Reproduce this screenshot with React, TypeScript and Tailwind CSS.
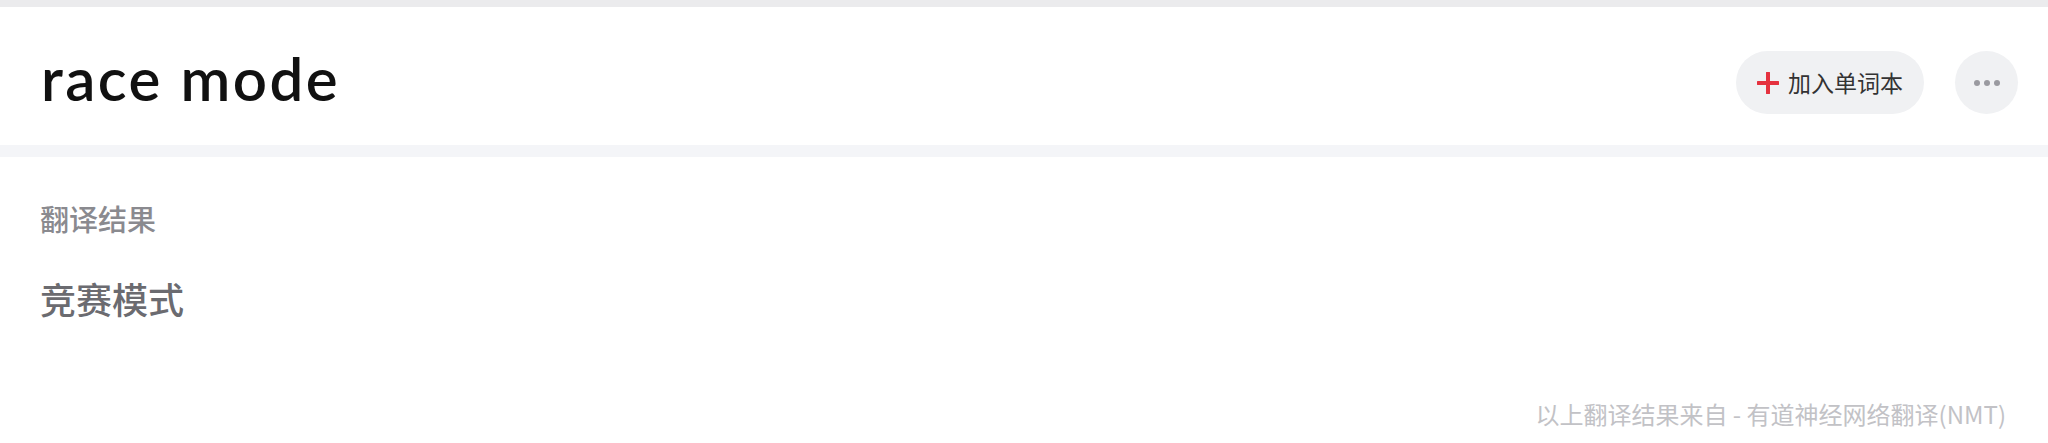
export default function App() {
  return (
    <div className="min-h-screen bg-white">
      {/* top edge */}
      <div className="h-[7px] bg-[#ebebed]" />

      {/* word header */}
      <div className="flex h-[138px] items-center justify-between pt-[13px] pl-[41px] pr-[30px]">
        <h1 className="-mt-[10px] font-['Lato',sans-serif] text-[60px] font-semibold leading-none tracking-[2.5px] text-[#111]">
          race mode
        </h1>
        <div className="flex items-center gap-[31px]">
          <button className="flex h-[63px] w-[188px] items-center justify-center gap-[9px] rounded-full bg-[#f0f1f3] font-['Noto_Sans_CJK_SC',sans-serif] text-[23px] text-[#333]">
            <svg width="22" height="22" viewBox="0 0 22 22">
              <path d="M11 1v20M1 11h20" stroke="#e5323f" strokeWidth="4" strokeLinecap="round" />
            </svg>
            <span>加入单词本</span>
          </button>
          <button className="flex h-[63px] w-[63px] items-center justify-center gap-[4px] rounded-full bg-[#f0f1f3]">
            <span className="h-[6px] w-[6px] rounded-full bg-[#9a9aa0]" />
            <span className="h-[6px] w-[6px] rounded-full bg-[#9a9aa0]" />
            <span className="h-[6px] w-[6px] rounded-full bg-[#9a9aa0]" />
          </button>
        </div>
      </div>

      <div className="h-[12px] bg-[#f4f5f8]" />

      {/* translation */}
      <div className="px-[40px] pt-[47px] font-['Noto_Sans_CJK_SC',sans-serif]">
        <div className="text-[29px] font-medium leading-none text-[#8a8a8f]">翻译结果</div>
        <div className="mt-[47px] text-[36px] font-medium leading-none text-[#6b6b70]">竞赛模式</div>
      </div>

      <div className="flex justify-end pr-[42px] pt-[86px] font-['Noto_Sans_CJK_SC',sans-serif] text-[24px] leading-none text-[#c2c2c6]">
        以上翻译结果来自 - 有道神经网络翻译(NMT)
      </div>
    </div>
  );
}
